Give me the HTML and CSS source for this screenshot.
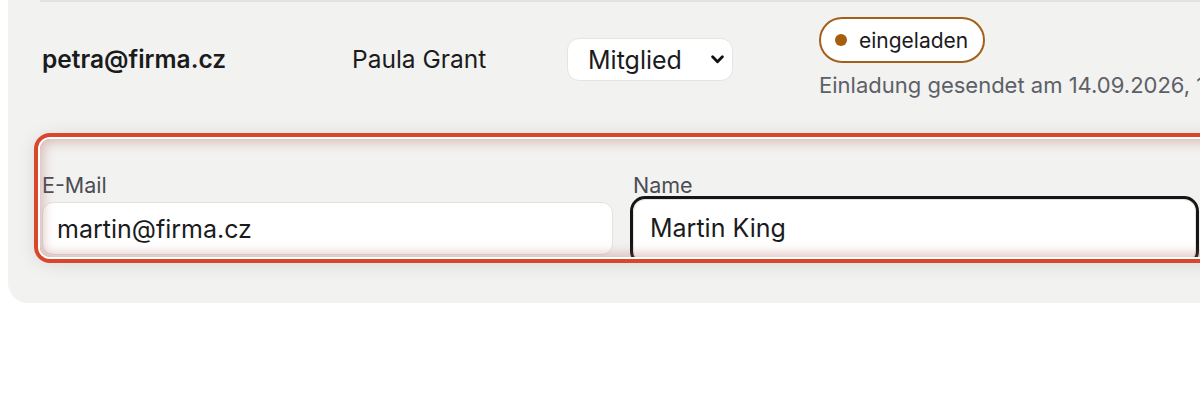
FILE: index.html
```html
<!DOCTYPE html>
<html lang="de">
<head>
<meta charset="utf-8">
<title>Mitglieder</title>
<link rel="stylesheet" href="styles.css">
</head>
<body>
<div class="card">
  <div class="member-row">
    <div class="cell email">petra@firma.cz</div>
    <div class="cell name">Paula Grant</div>
    <div class="cell role">
      <div class="select-wrap">
        <select class="role-select">
          <option>Mitglied</option>
          <option>Admin</option>
        </select>
        <svg class="chev" viewBox="0 0 12 8" width="13" height="9" aria-hidden="true"><path d="M1.5 1.5 L6 6 L10.5 1.5" fill="none" stroke="#111" stroke-width="2.6" stroke-linecap="round" stroke-linejoin="round"/></svg>
      </div>
    </div>
    <div class="cell status">
      <span class="badge"><span class="dot"></span>eingeladen</span>
      <div class="sent">Einladung gesendet am 14.09.2026, 10:42</div>
    </div>
  </div>

  <form class="invite-form">
    <label class="field">
      <span class="label">E-Mail</span>
      <input class="input" type="email" value="martin@firma.cz">
    </label>
    <label class="field">
      <span class="label">Name</span>
      <input class="input focused" type="text" value="Martin King">
    </label>
  </form>
</div>
</body>
</html>
```
FILE: styles.css
```css
html, body {
  margin: 0;
  padding: 0;
  background: #ffffff;
}
body {
  font-family: "Inter", "Noto Sans", sans-serif;
  color: #1b1b1d;
}
.card {
  margin-left: 8px;
  width: 1192px;
  overflow: hidden;
  background: #f2f2f0;
  border-radius: 0 0 0 20px;
  padding: 0 0 46px 32px;
  box-sizing: border-box;
}
.member-row {
  display: grid;
  grid-template-columns: 310px 215px 252px 1fr;
  align-items: center;
  border-top: 2px solid #e2e2df;
  padding: 15px 0 16px 2px;
  white-space: nowrap;
}
.email {
  font-size: 24.5px;
  font-weight: 600;
}
.name {
  font-size: 24.5px;
}
.select-wrap {
  position: relative;
  width: 166px;
  height: 43px;
  margin-top: 2px;
}
.role-select {
  appearance: none;
  -webkit-appearance: none;
  width: 100%;
  height: 100%;
  border: 1px solid #e4e4e2;
  border-radius: 12px;
  background: #ffffff;
  font-family: inherit;
  font-size: 25px;
  color: #1b1b1d;
  padding: 0 0 0 20px;
}
.chev {
  position: absolute;
  right: 9px;
  top: 17px;
  pointer-events: none;
}
.status {
  display: flex;
  flex-direction: column;
  align-items: flex-start;
  gap: 7px;
}
.badge {
  display: inline-flex;
  align-items: center;
  gap: 12px;
  height: 46px;
  box-sizing: border-box;
  padding: 0 15px 0 14px;
  border: 2px solid #a2601a;
  border-radius: 23px;
  background: #ffffff;
  font-size: 21px;
  color: #1b1b1d;
}
.dot {
  width: 12px;
  height: 12px;
  border-radius: 50%;
  background: #a65d0e;
}
.sent {
  font-size: 22px;
  color: #5c6068;
  line-height: 30px;
}
.invite-form {
  margin-top: 23px;
  width: 1190px;
  height: 118px;
  box-sizing: border-box;
  padding: 33px 0 0 2px;
  display: grid;
  grid-template-columns: 571px 563px;
  column-gap: 20px;
  align-items: start;
  border-radius: 10px;
  overflow: hidden;
  position: relative;
  box-shadow: 0 0 0 2px #ffffff, 0 0 0 6px #d9462b, 0 2px 18px 6px rgba(0, 0, 0, 0.10);
}
.invite-form::after {
  content: "";
  position: absolute;
  inset: 0;
  border-radius: 10px;
  pointer-events: none;
  box-shadow: inset 0 0 12px 3px rgba(170, 95, 85, 0.38);
}
.field {
  display: flex;
  flex-direction: column;
  gap: 4px;
}
.label {
  font-size: 21.5px;
  color: #4c4c55;
  line-height: 26px;
}
.input {
  height: 53px;
  box-sizing: border-box;
  border: 1px solid #e2e2e0;
  border-radius: 11px;
  background: #ffffff;
  padding: 0 14px;
  font-family: inherit;
  font-size: 25px;
  color: #1b1b1d;
}
.input.focused {
  outline: 3px solid #161616;
  outline-offset: 0;
  border-radius: 12px;
  padding-left: 16px;
  margin-top: -3px;
  height: 64px;
  padding-bottom: 6px;
}
```
